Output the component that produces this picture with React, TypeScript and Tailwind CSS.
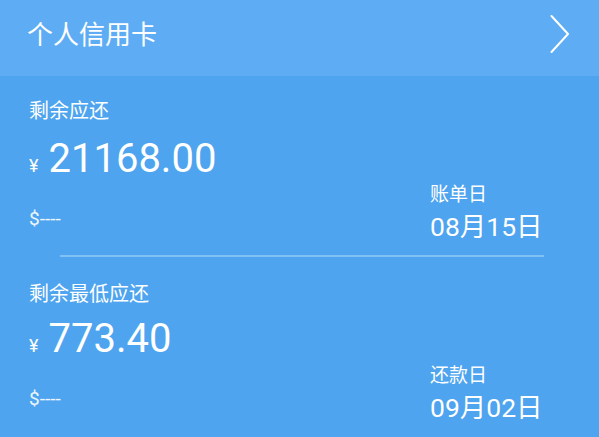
import React from "react";

const cjk = { fontFamily: "'Noto Sans CJK SC', 'Noto Sans', sans-serif" };
const num = { fontFamily: "Roboto, 'Noto Sans CJK SC', sans-serif" };

function Section(props: {
  label: string;
  amount: string;
  rightLabel: string;
  date: string;
  pt: string;
  amtMt: string;
}) {
  return (
    <div className="flex h-[180px]">
      <div className={`w-[430px] pl-[29px] ${props.pt}`}>
        <div className="text-[20px] leading-[24px] text-white" style={cjk}>
          {props.label}
        </div>
        <div className={`flex items-baseline ${props.amtMt}`} style={num}>
          <span className="text-[18px] text-white mr-[10px]">¥</span>
          <span className="text-[40px] leading-[46px] text-white">{props.amount}</span>
        </div>
        <div className="mt-[26px] text-[19px] leading-[22px] text-white/90" style={num}>
          $----
        </div>
      </div>
      <div className="pt-[105px]">
        <div className="text-[19px] leading-[24px] text-white" style={cjk}>
          {props.rightLabel}
        </div>
        <div className="mt-[7px] text-[26.5px] leading-[30px] text-white" style={num}>
          {props.date}
        </div>
      </div>
    </div>
  );
}

export default function App() {
  return (
    <div className="w-[599px] h-[437px] overflow-hidden bg-[#4ea4ee]">
      <div className="h-[76px] bg-[#5eadf4] flex justify-between pl-[27px] pr-[29px]">
        <div className="pt-[18px] text-[26px] leading-[30px] text-white" style={cjk}>
          个人信用卡
        </div>
        <svg className="mt-[15px]" width="20" height="38" viewBox="0 0 20 38" fill="none">
          <polyline points="1.5,1 18,19 1.5,37" stroke="white" strokeWidth="2" strokeLinecap="round" strokeLinejoin="round" />
        </svg>
      </div>
      <div className="h-[179px] overflow-hidden">
        <Section label="剩余应还" amount="21168.00" rightLabel="账单日" date="08月15日" pt="pt-[22px]" amtMt="mt-[14px]" />
      </div>
      <div className="ml-[60px] w-[484px] h-[2px] bg-[#7ec2f6]" />
      <Section label="剩余最低应还" amount="773.40" rightLabel="还款日" date="09月02日" pt="pt-[24px]" amtMt="mt-[11px]" />
    </div>
  );
}
